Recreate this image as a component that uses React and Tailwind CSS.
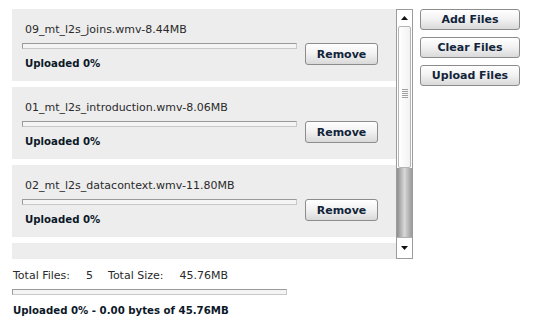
import React from "react";

const files = [
  { name: "09_mt_l2s_joins.wmv", size: "8.44MB" },
  { name: "01_mt_l2s_introduction.wmv", size: "8.06MB" },
  { name: "02_mt_l2s_datacontext.wmv", size: "11.80MB" },
  { name: "03_mt_l2s_querying.wmv", size: "9.54MB" },
];

const font = { fontFamily: '"DejaVu Sans", Verdana, sans-serif' };

function Bar() {
  return (
    <div className="w-[275px] h-[6px] border border-[#9a9a9a] border-b-[#c8c8c8] border-r-[#c8c8c8] bg-[#f4f4f4]" />
  );
}

function Btn({ children, className }) {
  return (
    <button
      className={
        "flex items-center justify-center rounded-[3px] border border-[#8c8c8c] bg-gradient-to-b from-[#ffffff] via-[#f1f1f1] to-[#d9d9d9] text-[11px] font-bold text-[#12243a] leading-none " +
        className
      }
    >
      {children}
    </button>
  );
}

function FileItem({ file }) {
  return (
    <div className="h-[72px] shrink-0 bg-[#ededed] flex flex-col">
      <div className="mt-[14px] ml-[13px] h-[14px] leading-[14px] text-[11px] text-[#2a2a2a]">
        {file.name}-{file.size}
      </div>
      <div className="mt-[6px] flex items-start">
        <div className="ml-[10px] flex flex-col">
          <Bar />
          <div className="mt-[8px] ml-[3px] h-[14px] leading-[14px] text-[10.2px] font-bold text-[#0c1828]">
            Uploaded 0%
          </div>
        </div>
        <Btn className="ml-[8px] w-[73px] h-[22px]">Remove</Btn>
      </div>
    </div>
  );
}

function Scrollbar() {
  return (
    <div className="w-[17px] h-[250px] border border-[#9c9c9c] bg-white flex flex-col">
      <div className="h-[16px] shrink-0 flex items-center justify-center">
        <svg width="7" height="4" viewBox="0 0 7 4">
          <path d="M3.5 0 L7 4 L0 4 Z" fill="#111" />
        </svg>
      </div>
      <div className="h-[142px] shrink-0 mx-[1px] rounded-[2px] border border-[#b5b5b5] bg-gradient-to-r from-[#ffffff] to-[#f2f2f2] flex items-center justify-center">
        <div className="flex flex-col gap-[1px] mb-[8px]">
          <div className="w-[6px] h-[1px] bg-[#a0a0a0]" />
          <div className="w-[6px] h-[1px] bg-[#a0a0a0]" />
          <div className="w-[6px] h-[1px] bg-[#a0a0a0]" />
          <div className="w-[6px] h-[1px] bg-[#a0a0a0]" />
          <div className="w-[6px] h-[1px] bg-[#a0a0a0]" />
        </div>
      </div>
      <div className="flex-1 bg-gradient-to-r from-[#8e8e8e] via-[#d8d8d8] to-[#9a9a9a]" />
      <div className="h-[21px] shrink-0 border-t border-[#b0b0b0] flex items-center justify-center">
        <svg width="7" height="4" viewBox="0 0 7 4">
          <path d="M0 0 L7 0 L3.5 4 Z" fill="#111" />
        </svg>
      </div>
    </div>
  );
}

export default function App() {
  return (
    <div className="w-[539px] h-[334px] bg-white flex pt-[9px] pl-[12px]" style={font}>
      <div className="flex flex-col">
        <div className="flex">
          <div className="w-[384px] h-[250px] overflow-hidden flex flex-col gap-[6px]">
            {files.map((f) => (
              <FileItem key={f.name} file={f} />
            ))}
          </div>
          <Scrollbar />
        </div>
        <div className="mt-[10px] ml-[1px] h-[14px] leading-[14px] text-[11px] text-[#2a2a2a] flex">
          <span>Total Files:</span>
          <span className="ml-[16px]">5</span>
          <span className="ml-[15px]">Total Size:</span>
          <span className="ml-[16px]">45.76MB</span>
        </div>
        <div className="mt-[6px]">
          <Bar />
        </div>
        <div className="mt-[9px] ml-[1px] h-[14px] leading-[14px] text-[10.2px] font-bold text-[#0c1828]">
          Uploaded 0% - 0.00 bytes of 45.76MB
        </div>
      </div>
      <div className="ml-[7px] flex flex-col gap-[7px]">
        <Btn className="w-[100px] h-[21px]">Add Files</Btn>
        <Btn className="w-[100px] h-[21px]">Clear Files</Btn>
        <Btn className="w-[100px] h-[21px]">Upload Files</Btn>
      </div>
    </div>
  );
}
